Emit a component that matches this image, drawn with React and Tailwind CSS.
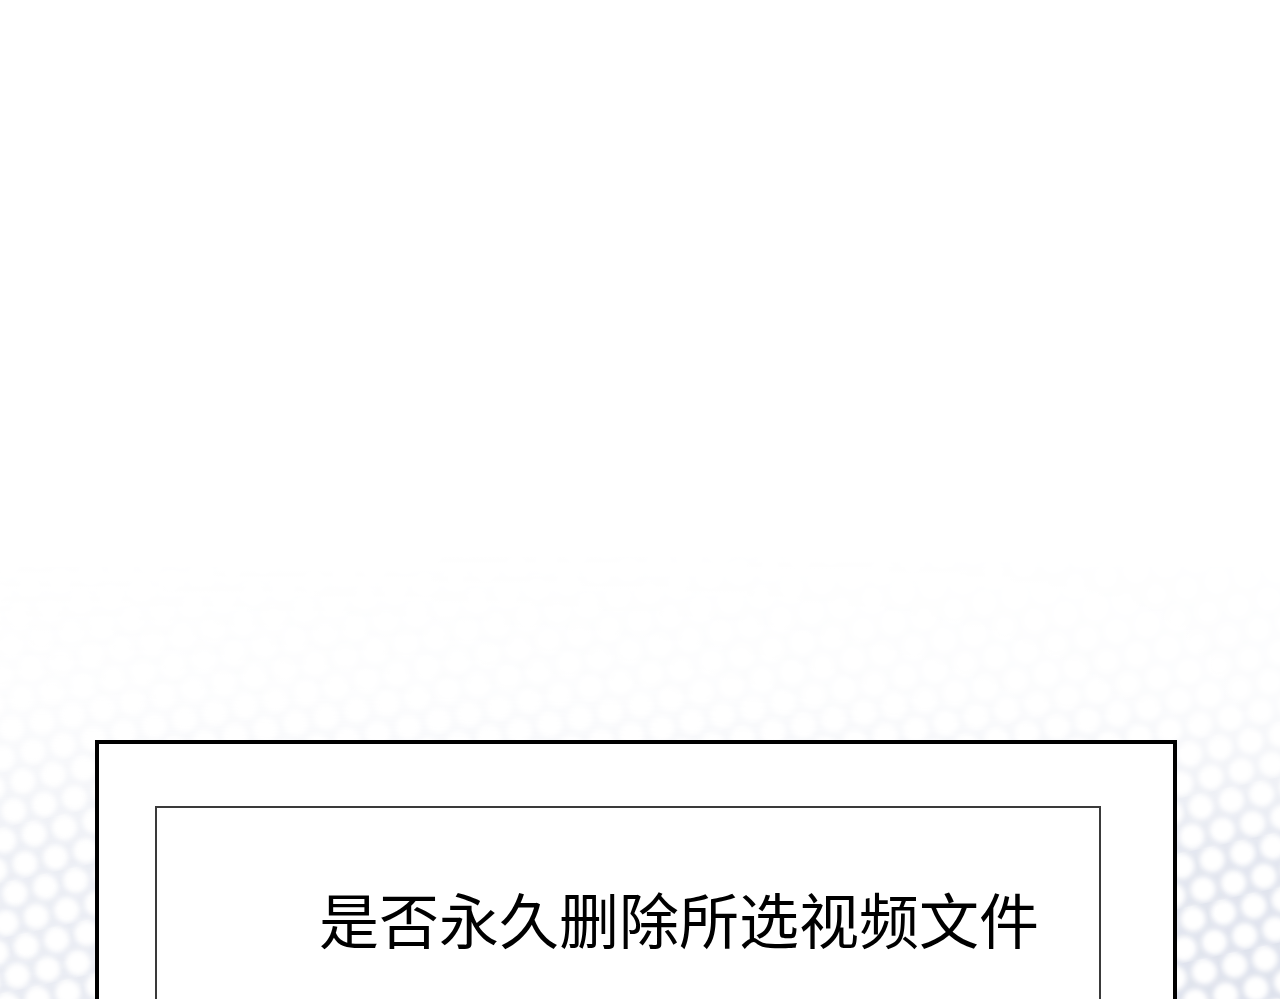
import React from 'react';

// soft bokeh dots that fade in toward the bottom of the page
function Bokeh() {
  return (
    <svg
      className="absolute inset-0 h-full w-full"
      width="1280"
      height="999"
      xmlns="http://www.w3.org/2000/svg"
    >
      <defs>
        <filter id="soft" x="-20%" y="-20%" width="140%" height="140%">
          <feGaussianBlur stdDeviation="2.6" />
        </filter>
        <pattern
          id="dots"
          width="62"
          height="54"
          patternUnits="userSpaceOnUse"
          patternTransform="rotate(-12)"
        >
          <rect width="62" height="54" fill="#dde1ec" />
          <g fill="#ffffff" filter="url(#soft)">
            <circle cx="15" cy="13" r="12.5" />
            <circle cx="46" cy="13" r="12.5" />
            <circle cx="0" cy="40" r="12.5" />
            <circle cx="31" cy="40" r="12.5" />
            <circle cx="62" cy="40" r="12.5" />
            <circle cx="15" cy="67" r="12.5" />
            <circle cx="46" cy="67" r="12.5" />
            <circle cx="15" cy="-14" r="12.5" />
            <circle cx="46" cy="-14" r="12.5" />
          </g>
        </pattern>
        <linearGradient id="fadeY" x1="0" y1="0" x2="0" y2="1">
          <stop offset="0.55" stopColor="#fff" stopOpacity="0" />
          <stop offset="0.7" stopColor="#fff" stopOpacity="0.12" />
          <stop offset="0.76" stopColor="#fff" stopOpacity="0.35" />
          <stop offset="0.86" stopColor="#fff" stopOpacity="0.85" />
          <stop offset="1" stopColor="#fff" stopOpacity="1" />
        </linearGradient>
        <linearGradient id="fadeX" x1="0" y1="0" x2="1" y2="0">
          <stop offset="0" stopColor="#fff" stopOpacity="0.65" />
          <stop offset="0.5" stopColor="#fff" stopOpacity="0.8" />
          <stop offset="1" stopColor="#fff" stopOpacity="1" />
        </linearGradient>
        <mask id="fadeMaskX">
          <rect width="1280" height="999" fill="url(#fadeX)" />
        </mask>
        <mask id="fadeMask">
          <rect width="1280" height="999" fill="url(#fadeY)" />
        </mask>
      </defs>
      <g mask="url(#fadeMask)">
        <rect width="1280" height="999" fill="url(#dots)" mask="url(#fadeMaskX)" />
      </g>
    </svg>
  );
}

export default function App() {
  return (
    <div
      className="relative h-[999px] w-[1280px] overflow-hidden bg-white"
      style={{ fontFamily: '"Noto Sans CJK SC", "Noto Sans", sans-serif' }}
    >
      <Bokeh />

      <div className="relative pt-[740px] pl-[95px]">
        {/* outer panel */}
        <div className="h-[300px] w-[1082px] border-4 border-black bg-white pt-[62px] pl-[56px] pr-[72px]">
          {/* inner panel */}
          <div className="h-[300px] border-2 border-[#3a3a3a] bg-white pt-[80px] pl-[162px]">
            <p className="text-[60px] leading-none font-normal text-black whitespace-nowrap">
              是否永久删除所选视频文件
            </p>
          </div>
        </div>
      </div>
    </div>
  );
}
